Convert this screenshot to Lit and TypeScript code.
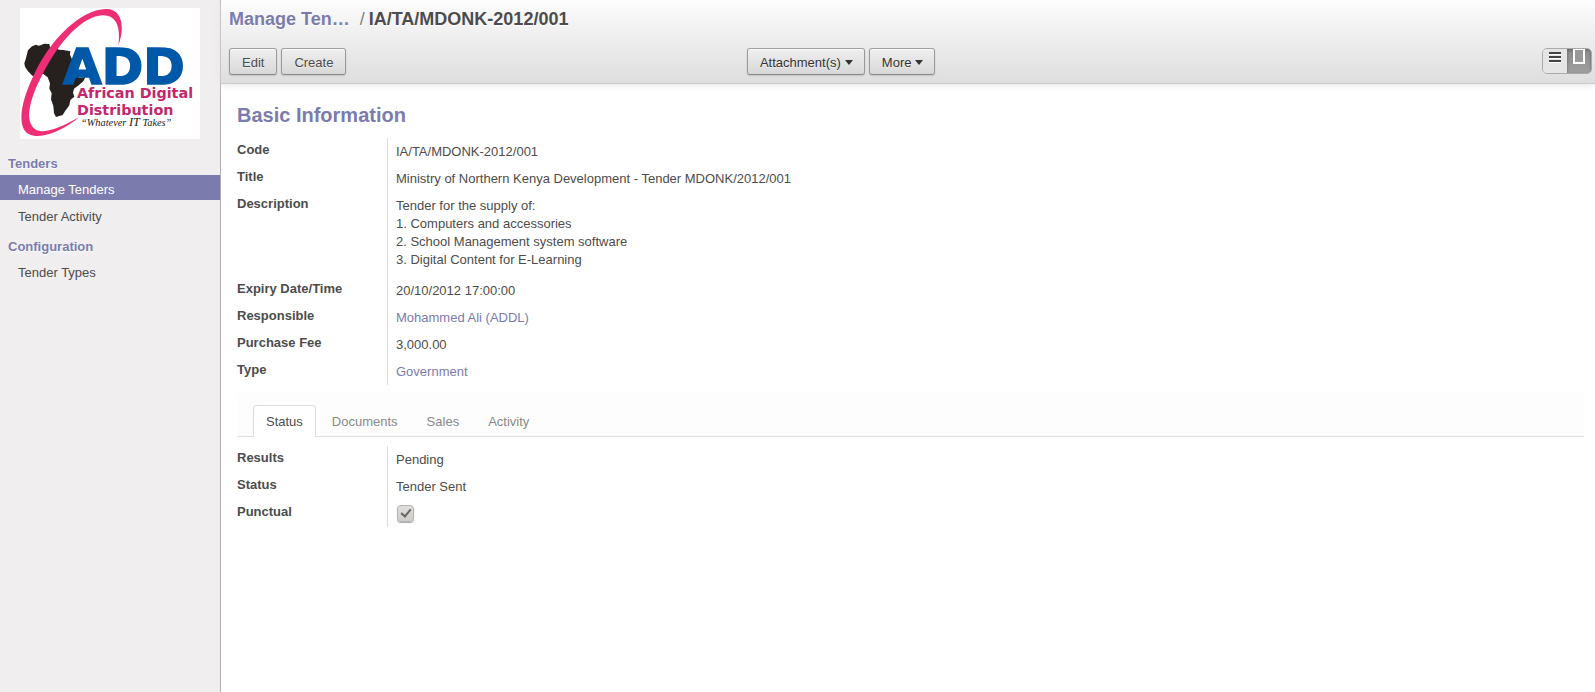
import { LitElement, html, css, svg, nothing } from "lit";
import { customElement, property, state } from "lit/decorators.js";
import { classMap } from "lit/directives/class-map.js";

interface Field {
  label: string;
  value: string;
  kind?: "text" | "link" | "lines" | "check";
}

const BASIC: Field[] = [
  { label: "Code", value: "IA/TA/MDONK-2012/001" },
  { label: "Title", value: "Ministry of Northern Kenya Development - Tender MDONK/2012/001" },
  {
    label: "Description",
    kind: "lines",
    value:
      "Tender for the supply of:\n1. Computers and accessories\n2. School Management system software\n3. Digital Content for E-Learning",
  },
  { label: "Expiry Date/Time", value: "20/10/2012 17:00:00" },
  { label: "Responsible", value: "Mohammed Ali (ADDL)", kind: "link" },
  { label: "Purchase Fee", value: "3,000.00" },
  { label: "Type", value: "Government", kind: "link" },
];

const STATUS: Field[] = [
  { label: "Results", value: "Pending" },
  { label: "Status", value: "Tender Sent" },
  { label: "Punctual", value: "", kind: "check" },
];

const MENU = [
  { title: "Tenders", items: ["Manage Tenders", "Tender Activity"] },
  { title: "Configuration", items: ["Tender Types"] },
];

const TABS = ["Status", "Documents", "Sales", "Activity"];

@customElement("company-logo")
class CompanyLogo extends LitElement {
  static styles = css`
    :host { display: block; width: 180px; background: #fff; }
    .art { display: block; width: 100%; }
    .name { font: bold 150px "DejaVu Sans", sans-serif; fill: #0058a8; stroke: #0058a8; stroke-width: 5px; }
    .line { font: bold 43px "DejaVu Sans", sans-serif; fill: #c2286b; }
    .motto { font: italic 31px "Liberation Serif", serif; fill: #222; }
    .big { font-size: 37px; }
  `;
  render() {
    return html`<svg class="art" viewBox="60 24 540 393" role="img" aria-label="African Digital Distribution">
      ${svg`
      <path fill="#26211e" d="M84 151 L96 139 L108 134 L116 137 L122 136 L132 131 L148 132 L150 142 L164 146 L170 144 L176 149 L190 150 L211 154 L210 164 L216 178 L222 200 L227 210 L232 226 L238 234 L256 232 L250 244 L236 256 L222 266 L219 278 L223 290 L211 300 L208 316 L196 332 L188 345 L168 351 L162 340 L160 318 L153 298 L155 280 L148 266 L150 250 L143 232 L130 222 L112 225 L98 228 L84 214 L75 200 L73 190 L77 178 Z"/>
      <path fill="#ee2e74" d="M355 137 C376 80 366 26 318 27 C240 30 156 115 106 215 C60 307 50 382 86 402 C126 423 196 386 237 352 C190 378 138 404 108 389 C72 368 86 302 128 222 C180 120 250 48 308 46 C352 45 362 86 355 137 Z"/>
      <text class="name" x="189" y="251">ADD</text>
      <text class="line" x="231" y="295">African Digital</text>
      <text class="line" x="231" y="344">Distribution</text>
      <text class="motto" x="243" y="377">“Whatever <tspan class="big">IT</tspan> Takes”</text>`}
    </svg>`;
  }
}

@customElement("field-group")
class FieldGroup extends LitElement {
  @property({ attribute: false }) fields: Field[] = [];

  static styles = css`
    :host { display: block; }
    .group { width: 100%; border-collapse: collapse; }
    .label { width: 150px; padding: 3px 0 6px; text-align: left; vertical-align: top; font-weight: bold; border-right: 1px solid #ddd; }
    .cell { padding: 5px 0 4px 8px; vertical-align: top; }
    .link { color: #7c7bad; text-decoration: none; }
    .lines { min-height: 76px; white-space: pre-line; }
    .check {
      appearance: none; display: block; width: 17px; height: 17px; margin: 0 0 0 1px;
      border: 1px solid #b5b3b0; border-radius: 4px; box-shadow: 0 1px 1px #aaa;
      background: linear-gradient(#e0deda, #cfcdc9); position: relative;
    }
    .check:checked::after {
      content: ""; position: absolute; left: 5px; top: 1px; width: 4px; height: 8px;
      border: solid #666; border-width: 0 2px 2px 0; transform: rotate(40deg);
    }
  `;

  private cell(f: Field) {
    if (f.kind === "link") return html`<a class="link" href="#">${f.value}</a>`;
    if (f.kind === "lines") return html`<div class="lines">${f.value}</div>`;
    if (f.kind === "check") return html`<input class="check" id=${f.label} type="checkbox" checked />`;
    return f.value;
  }

  render() {
    return html`<table class="group">
      ${this.fields.map(
        (f) => html`<tr>
          <th class="label" scope="row">
            ${f.kind === "check" ? html`<label for=${f.label}>${f.label}</label>` : f.label}
          </th>
          <td class="cell">${this.cell(f)}</td>
        </tr>`
      )}
    </table>`;
  }
}

@customElement("app-root")
class AppRoot extends LitElement {
  @state() private tab = "Status";

  static styles = css`
    :host { display: flex; min-height: 100vh; color: #4c4c4c; background: #fff; font: 13px/18px "Liberation Sans", Arial, sans-serif; }
    .side { flex: none; width: 220px; background: #f0eeee; border-right: 1px solid #afafb6; }
    .logo { margin: 8px auto 14px 20px; }
    .heading { margin: 0; padding: 1px 8px; font-size: 13px; line-height: 20px; color: #7c7bad; text-shadow: 0 1px 1px #fff; }
    .menu { list-style: none; margin: 0 0 9px; padding: 0; }
    .entry { display: block; margin-bottom: 2px; padding: 6px 18px 1px; color: #4c4c4c; text-decoration: none; }
    .entry.on { background: #7c7bad; color: #fff; }
    .main { flex: 1; min-width: 0; }
    .top { height: 83px; border-bottom: 1px solid #cacaca; background: linear-gradient(#fcfcfc, #dedede); box-shadow: 0 1px 8px #e4e4e4; }
    .crumbs { display: flex; align-items: center; height: 38px; margin: 0; padding: 0 8px; font-size: 18px; line-height: 24px; white-space: nowrap; text-shadow: 0 1px 1px #fff; }
    .crumb { color: #7c7bad; text-decoration: none; }
    .slash { padding: 0 4px 0 10px; font-weight: normal; color: #808080; }
    .tools { display: grid; grid-template-columns: 38% 1fr auto; align-items: start; padding: 10px 3px 0 8px; }
    .set { display: flex; gap: 4px; }
    .btn {
      display: flex; align-items: center; gap: 4px; height: 27px; padding: 2px 12px 0; font: inherit; color: #4c4c4c;
      border: 1px solid #999; border-color: #a0a0a0 #999 #888; border-radius: 3px;
      background: linear-gradient(#efefef, #d8d8d8); box-shadow: 0 1px 2px #0002, inset 0 1px 1px #fffc; text-shadow: 0 1px 1px #fff8;
    }
    .drop { color: #333; }
    .caret { width: 8px; height: 5px; margin-right: -1px; fill: #333; }
    .switch { display: flex; height: 26px; border: 1px solid #aaa; border-radius: 5px; overflow: hidden; box-sizing: border-box; }
    .view { display: block; width: 24px; padding: 0; border: 0; background: #e6e6e6; }
    .view.on { background: linear-gradient(#8a8a8a, #a0a0a0); box-shadow: inset 0 1px 3px #0005; }
    .glyph { display: block; width: 24px; height: 24px; }
    .sheet { padding: 19px 11px 16px 16px; }
    .title { margin: 0 0 11px; font-size: 20px; line-height: 24px; color: #7c7bad; }
    .tabs { display: flex; gap: 3px; margin: 8px 0 9px; padding: 12px 16px 0; background: #fdfdfd; border-bottom: 1px solid #ddd; }
    .tab { height: 32px; margin: 0 0 -1px; padding: 2px 12px 0; font: inherit; color: #888; background: none; border: 1px solid transparent; border-radius: 4px 4px 0 0; }
    .tab.on { color: #4c4c4c; background: #fff; border-color: #ddd #ddd #fff; }
  `;

  private drop(label: string) {
    return html`<button class="btn drop" type="button">
      ${label}<svg class="caret" viewBox="0 0 8 5" aria-hidden="true"><path d="M0 0H8L4 5Z" /></svg>
    </button>`;
  }

  render() {
    return html`
      <nav class="side">
        <company-logo class="logo"></company-logo>
        ${MENU.map(
          (g) => html`<h2 class="heading">${g.title}</h2>
            <ul class="menu">
              ${g.items.map(
                (i) => html`<li><a href="#" class=${classMap({ entry: true, on: i === "Manage Tenders" })}>${i}</a></li>`
              )}
            </ul>`
        )}
      </nav>
      <main class="main">
        <header class="top">
          <h1 class="crumbs">
            <a class="crumb" href="#">Manage Ten…</a><span class="slash">/</span><span>IA/TA/MDONK-2012/001</span>
          </h1>
          <div class="tools">
            <div class="set">
              <button class="btn" type="button">Edit</button>
              <button class="btn" type="button">Create</button>
            </div>
            <div class="set">${this.drop("Attachment(s)")}${this.drop("More")}</div>
            <div class="switch">
              <button class="view" type="button" aria-label="List">
                <svg class="glyph" viewBox="0 0 24 24"><path stroke="#fff" stroke-width="2" d="M6 5H18M6 9H18M6 13H18" /><path stroke="#444" stroke-width="2" d="M6 4H18M6 8H18M6 12H18" /></svg>
              </button>
              <button class="view on" type="button" aria-label="Form">
                <svg class="glyph" viewBox="0 0 24 24"><rect x="7" y="0" width="10" height="14" fill="#999" stroke="#fff" stroke-width="2" /></svg>
              </button>
            </div>
          </div>
        </header>
        <section class="sheet">
          <h2 class="title">Basic Information</h2>
          <field-group .fields=${BASIC}></field-group>
          <div class="tabs" role="tablist">
            ${TABS.map(
              (t) => html`<button
                type="button" role="tab" aria-selected=${t === this.tab ? "true" : "false"}
                class=${classMap({ tab: true, on: t === this.tab })}
                @click=${() => (this.tab = t)}
              >${t}</button>`
            )}
          </div>
          ${this.tab === "Status" ? html`<field-group .fields=${STATUS}></field-group>` : nothing}
        </section>
      </main>
    `;
  }
}
